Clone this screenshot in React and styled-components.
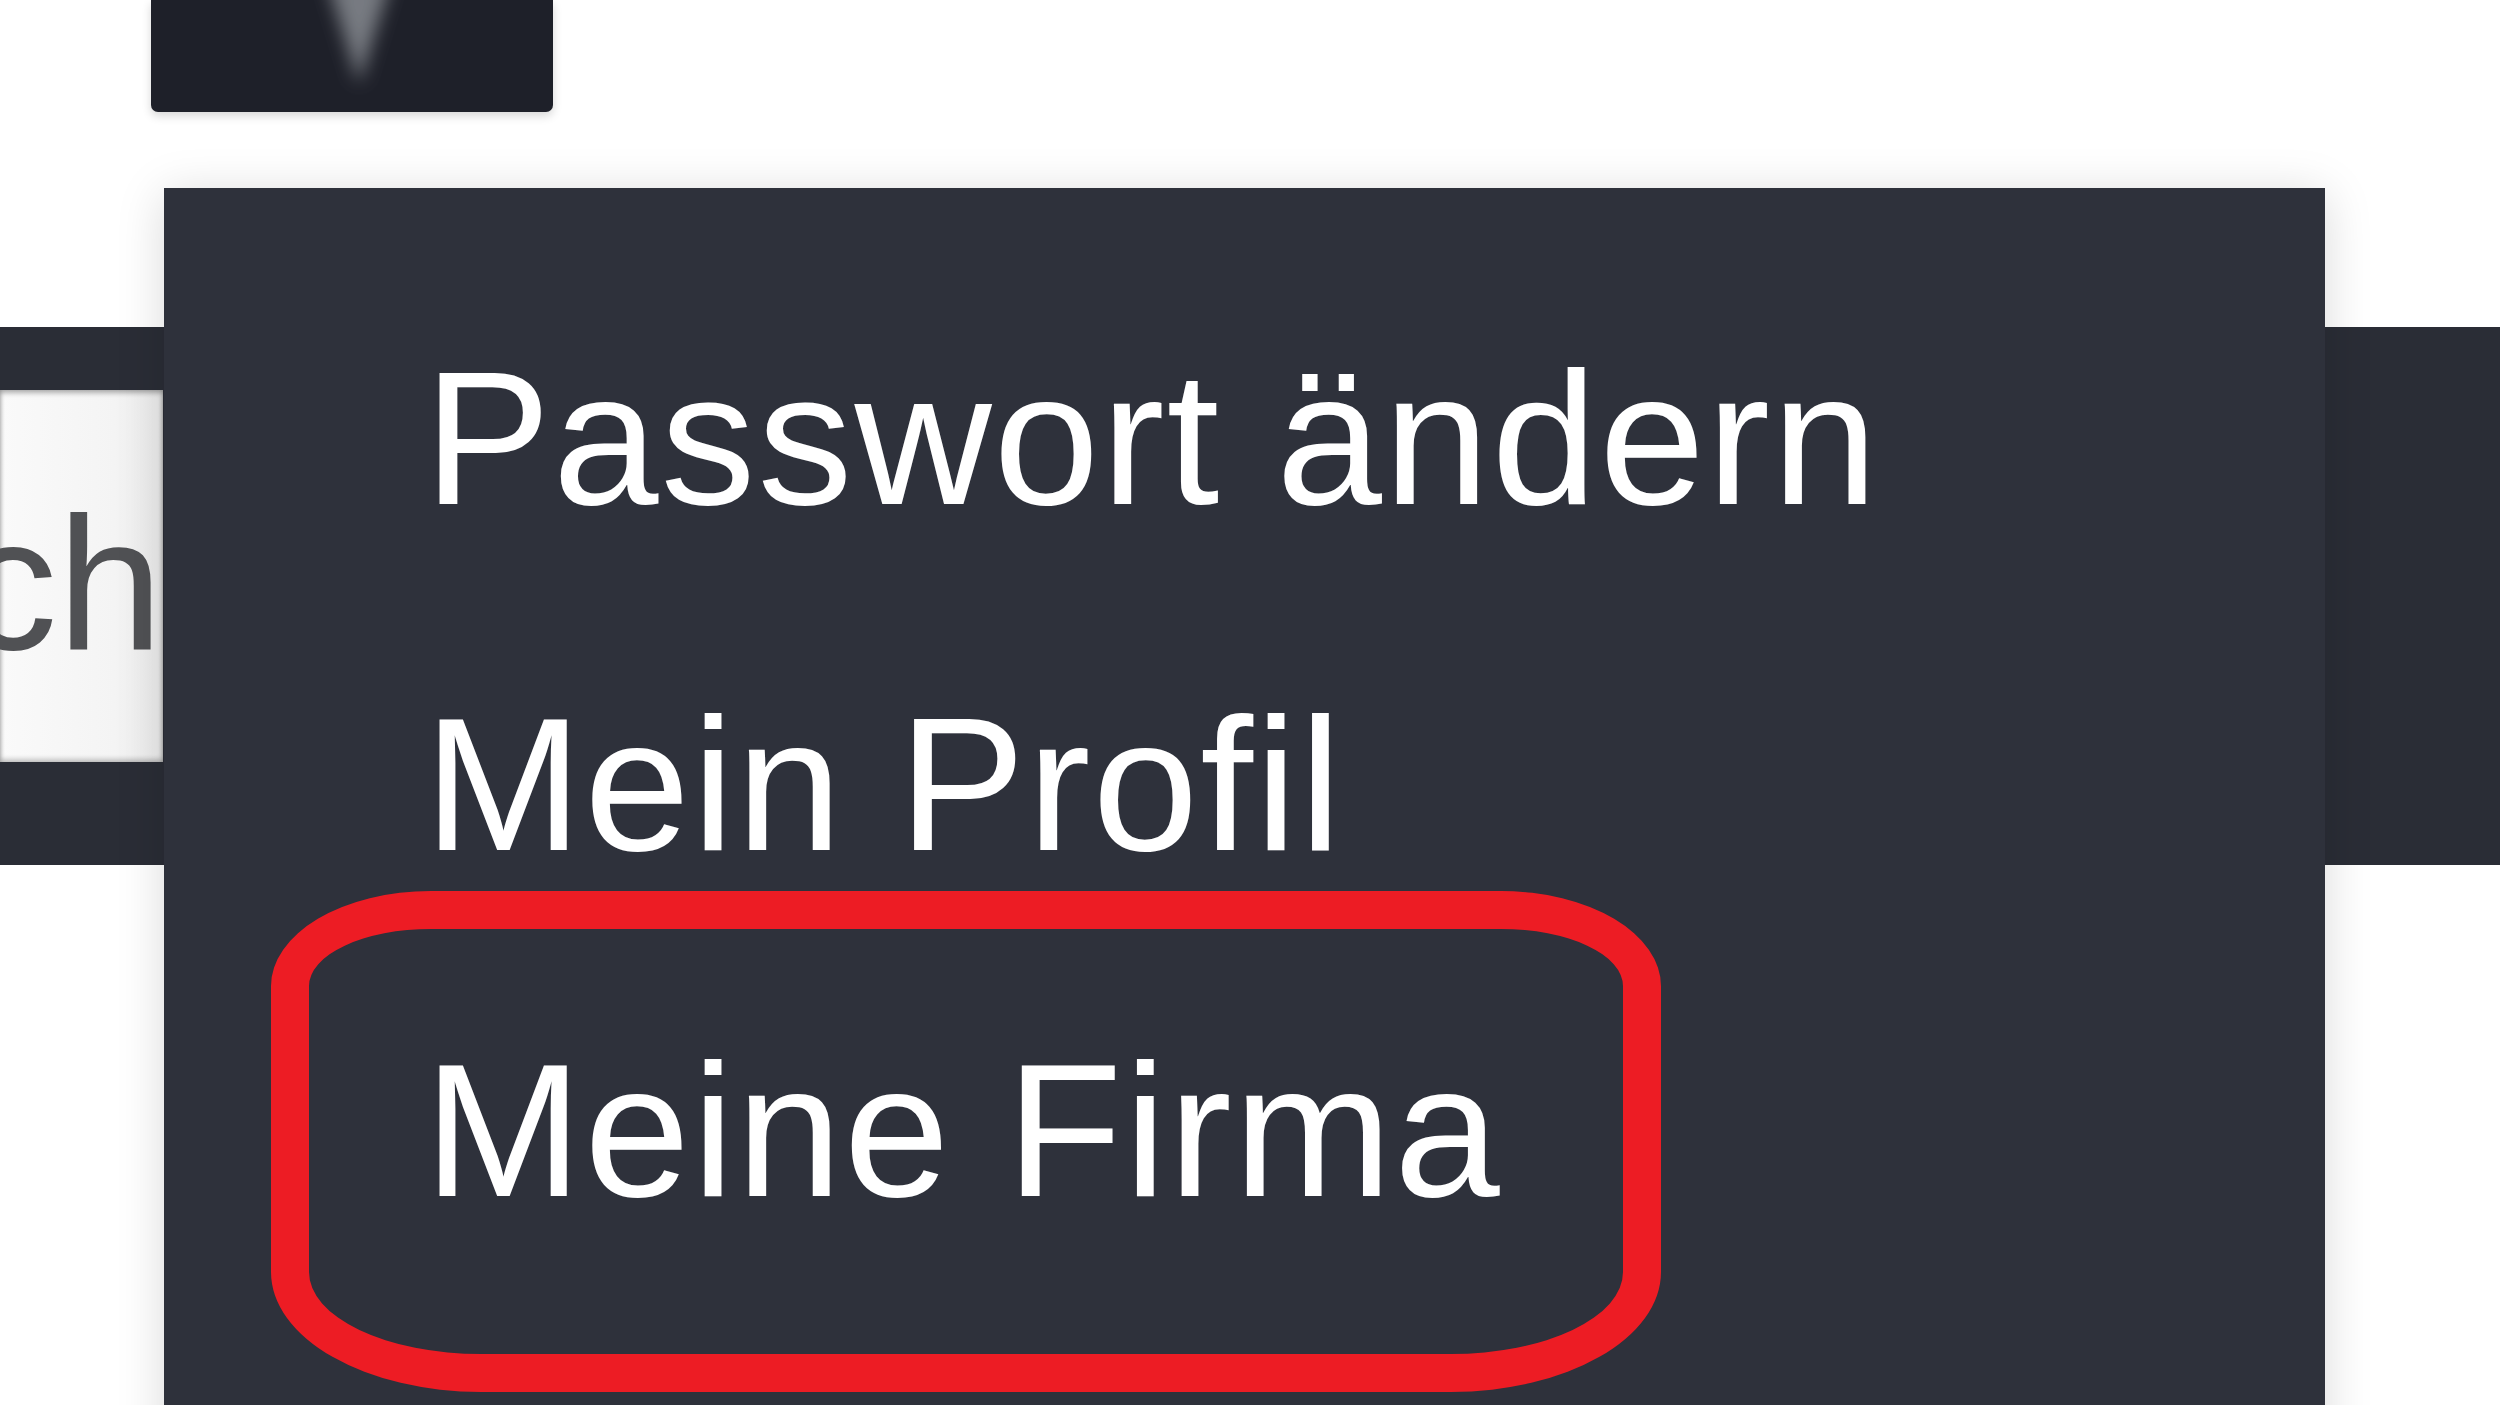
import styled, { createGlobalStyle } from "styled-components";

const GlobalStyle = createGlobalStyle`
  html, body {
    margin: 0;
    padding: 0;
    background: #ffffff;
    overflow: hidden;
  }
  * {
    box-sizing: border-box;
  }
`;

const Page = styled.div`
  position: relative;
  width: 2500px;
  height: 1405px;
  overflow: hidden;
  display: flex;
  flex-direction: column;
  background: #ffffff;
  font-family: "Liberation Sans", Arial, sans-serif;
`;

const TopStrip = styled.div`
  height: 327px;
  display: flex;
  align-items: flex-start;
  padding-left: 151px;
`;

const UserButton = styled.div`
  width: 402px;
  height: 112px;
  background: #1e2029;
  border-radius: 0 0 7px 7px;
  box-shadow: 0 4px 10px rgba(0, 0, 0, 0.16);
  display: flex;
  justify-content: center;
  overflow: hidden;
`;

const HeaderBar = styled.div`
  height: 538px;
  background: #2a2d36;
  display: flex;
  align-items: flex-start;
  padding-top: 63px;
`;

const SearchBox = styled.div`
  width: 163px;
  height: 372px;
  overflow: hidden;
  display: flex;
  justify-content: flex-end;
  align-items: flex-start;
  padding-top: 98px;
  background: linear-gradient(90deg, #fafafa 0%, #f4f4f4 70%, #ebebeb 100%);
  box-shadow: inset 0 3px 5px rgba(0, 0, 0, 0.3), inset 0 -3px 5px rgba(0, 0, 0, 0.22);
  font-size: 190px;
  line-height: 190px;
  color: #505154;
  white-space: nowrap;
`;

const Rest = styled.div`
  flex: 1;
  background: #ffffff;
`;

const Menu = styled.ul`
  position: absolute;
  left: 164px;
  top: 188px;
  width: 2161px;
  height: 1400px;
  margin: 0;
  padding: 77px 0 0 260px;
  list-style: none;
  background: #2e313b;
  box-shadow: 0 6px 45px rgba(0, 0, 0, 0.15);
`;

const MenuItem = styled.li`
  height: 346px;
  font-size: 190px;
  line-height: 346px;
  letter-spacing: 2px;
  color: #ffffff;
  white-space: nowrap;
`;

const Marker = styled.div`
  position: absolute;
  left: 271px;
  top: 891px;
  width: 1390px;
  height: 501px;
  border: 38px solid #ed1c24;
  border-radius: 160px 160px 210px 210px / 95px 95px 120px 120px;
  pointer-events: none;
`;

function Caret() {
  return (
    <svg width="402" height="112" viewBox="0 0 402 112">
      <defs>
        <filter id="soft" x="-50%" y="-50%" width="200%" height="200%">
          <feGaussianBlur stdDeviation="9" />
        </filter>
      </defs>
      <polygon points="176,-20 240,-20 208,84" fill="#777a81" filter="url(#soft)" />
    </svg>
  );
}

const items = ["Passwort ändern", "Mein Profil", "Meine Firma", "Abmelden"];

export default function App() {
  return (
    <>
      <GlobalStyle />
      <Page>
        <TopStrip>
          <UserButton>
            <Caret />
          </UserButton>
        </TopStrip>
        <HeaderBar>
          <SearchBox>Search</SearchBox>
        </HeaderBar>
        <Rest />
        <Menu>
          {items.map((item) => (
            <MenuItem key={item}>{item}</MenuItem>
          ))}
        </Menu>
        <Marker />
      </Page>
    </>
  );
}
